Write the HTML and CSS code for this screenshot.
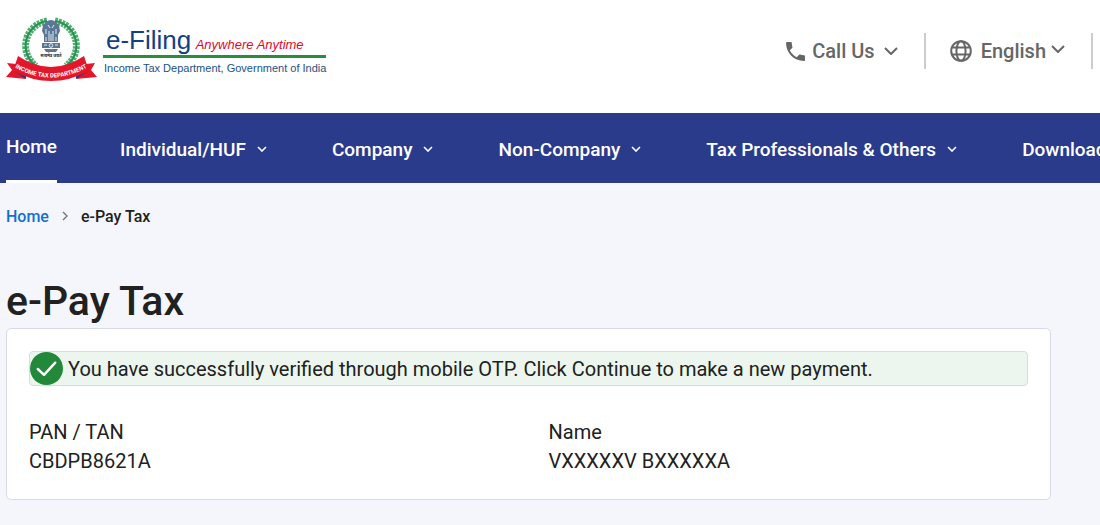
FILE: index.html
```
<!DOCTYPE html>
<html lang="en">
<head>
  <meta charset="UTF-8" />
  <meta name="viewport" content="width=device-width, initial-scale=1.0"/>
  <title>e-Pay Tax</title>
  <link rel="stylesheet" href="styles.css">
</head>
<body>

  <header class="header">
    <a class="logo" href="#">
      <svg class="emblem" viewBox="0 0 92 66" role="img" aria-label="Income Tax Department">
        <!-- wreath -->
        <g fill="none" stroke="#4fae72">
          <path d="M41 4 A25 25 0 0 0 30 49" stroke-width="7" stroke-dasharray="2.600 1"/>
          <path d="M49 4 A25 25 0 0 1 60 49" stroke-width="7" stroke-dasharray="2.600 1"/>
          <path d="M41 4 A25 25 0 0 0 30 49 M49 4 A25 25 0 0 1 60 49" stroke="#2a9150" stroke-width="2"/>
        </g>
        <!-- lion capital -->
        <g fill="#5b7796">
          <path d="M40 5 Q45 1 50 5 L53 8 L54 14 L52 18 L52 25 L38 25 L38 18 L36 14 L37 8 Z"/>
          <path d="M36 26 H54 V31 H36 Z"/>
          <path d="M38 32 H52 L50 35 H40 Z"/>
        </g>
        <g fill="none" stroke="#e3eaf1" stroke-width="1">
          <path d="M42 8 L44 11 M48 8 L46 11 M40 12 V17 M50 12 V17 M43 14 V24 M47 14 V24 M45 17 V24 M40 20 V24 M50 20 V24"/>
          <circle cx="45" cy="28.500" r="1.800"/>
          <path d="M38 28 H41 M49 28 H52"/>
        </g>
        <text class="motto" x="45" y="40" text-anchor="middle">सत्यमेव जयते</text>
        <!-- ribbon -->
        <path d="M10 47 L1 46 L6 53 L0 60 L20 62 Z M80 47 L89 46 L85 53 L91 60 L70 62 Z" fill="#e3162b"/>
        <path d="M8 54 L20 62 L20 57 Z M82 54 L70 62 L70 57 Z" fill="#1c3f7c"/>
        <path d="M12 39 Q45 61 78 39 L83 54 Q45 74 7 54 Z" fill="#e3162b"/>
        <path id="ribbon" d="M8 50 Q45 71 82 50" fill="none"/>
        <text class="ribbon-text"><textPath href="#ribbon" startOffset="50%" text-anchor="middle">INCOME TAX DEPARTMENT</textPath></text>
      </svg>
      <span class="logo-text">
        <span class="logo-top"><span class="brand">e-Filing</span> <em class="tagline">Anywhere Anytime</em></span>
        <span class="department">Income Tax Department, Government of India</span>
      </span>
    </a>

    <div class="tools">
      <button class="tool call" type="button">
        <svg class="icon" viewBox="0 0 18 18" fill="currentColor">
          <path d="M3.620 7.790c1.440 2.830 3.760 5.140 6.590 6.590l2.200-2.200c.27-.27.670-.36 1.020-.24 1.120.37 2.330.57 3.570.57.550 0 1 .45 1 1V17c0 .55-.45 1-1 1C7.610 18 0 10.390 0 1c0-.55.45-1 1-1h3.500c.55 0 1 .45 1 1 0 1.250.2 2.450.57 3.570.11.35.03.74-.25 1.020z"/>
        </svg>
        <span>Call Us</span>
        <svg class="chevron" viewBox="0 0 14 8"><path d="M1 1 L7 7 L13 1"/></svg>
      </button>
      <button class="tool language" type="button">
        <svg class="icon globe" viewBox="0 0 22 22">
          <circle cx="11" cy="11" r="9.800"/>
          <ellipse cx="11" cy="11" rx="4.600" ry="9.800"/>
          <path d="M2 7.500 H20 M2 14.500 H20"/>
        </svg>
        <span>English</span>
        <svg class="chevron" viewBox="0 0 14 8"><path d="M1 1 L7 7 L13 1"/></svg>
      </button>
    </div>
  </header>

  <nav class="nav">
    <a class="nav-link active" href="#">Home</a>
    <a class="nav-link" href="#">Individual/HUF <svg class="caret" viewBox="0 0 10 6"><path d="M1 1 L5 5 L9 1" stroke-width="1.600"/></svg></a>
    <a class="nav-link" href="#">Company <svg class="caret" viewBox="0 0 10 6"><path d="M1 1 L5 5 L9 1" stroke-width="1.600"/></svg></a>
    <a class="nav-link" href="#">Non-Company <svg class="caret" viewBox="0 0 10 6"><path d="M1 1 L5 5 L9 1" stroke-width="1.600"/></svg></a>
    <a class="nav-link" href="#">Tax Professionals &amp; Others <svg class="caret" viewBox="0 0 10 6"><path d="M1 1 L5 5 L9 1" stroke-width="1.600"/></svg></a>
    <a class="nav-link" href="#">Downloads</a>
  </nav>

  <main class="main">
    <div class="breadcrumb">
      <a href="#">Home</a>
      <svg class="separator" viewBox="0 0 6 10"><path d="M1 1 L5 5 L1 9" stroke-width="1.400"/></svg>
      <span>e-Pay Tax</span>
    </div>

    <h1>e-Pay Tax</h1>

    <section class="card">
      <div class="success" role="status">
        <svg class="check" viewBox="0 0 34 34">
          <circle cx="17" cy="17" r="17" fill="#22883a"/>
          <path d="M8 17.500 L14.500 23.500 L26 11" fill="none" stroke="#fff" stroke-width="2.500" stroke-linecap="round" stroke-linejoin="round"/>
        </svg>
        <span>You have successfully verified through mobile OTP. Click Continue to make a new payment.</span>
      </div>
      <dl class="details">
        <div>
          <dt>PAN / TAN</dt>
          <dd>CBDPB8621A</dd>
        </div>
        <div>
          <dt>Name</dt>
          <dd>VXXXXXV BXXXXXA</dd>
        </div>
      </dl>
    </section>
  </main>

</body>
</html>
```
FILE: styles.css
```
* {
  box-sizing: border-box;
}

body {
  margin: 0;
  font-family: Roboto, sans-serif;
  background: #f5f6fb;
  color: #212121;
  overflow-x: hidden;
}

a {
  text-decoration: none;
}

.header {
  display: flex;
  justify-content: space-between;
  align-items: flex-start;
  padding: 17px 7px 30px 6px;
  background: #fff;
}

.logo {
  display: flex;
  gap: 5px;
}

.emblem {
  width: 92px;
  height: 66px;
}

.motto {
  font: bold 4px "Noto Sans", sans-serif;
  fill: #222;
}

.ribbon-text {
  font: bold 6px Roboto, sans-serif;
  fill: #fff;
}

.logo-text {
  display: flex;
  flex-direction: column;
  padding-top: 8px;
  font-family: "Liberation Sans", sans-serif;
  white-space: nowrap;
}

.logo-top {
  height: 33px;
  padding-left: 3px;
  border-bottom: 3px solid #2a8c3c;
  line-height: 30px;
}

.brand {
  font-size: 26px;
  color: #123f86;
}

.tagline {
  font-size: 13px;
  color: #e2062c;
}

.department {
  padding-left: 1px;
  font-size: 11px;
  line-height: 20px;
  color: #1d5183;
}

.tools {
  display: flex;
  padding-top: 16px;
}

.tool {
  display: flex;
  align-items: center;
  height: 36px;
  padding: 0;
  border: 0;
  border-right: 2px solid #ccc;
  background: none;
  font: 500 20px Roboto, sans-serif;
  color: #666;
  cursor: pointer;
}

.call {
  gap: 7px;
  padding-right: 26px;
}

.language {
  gap: 9px;
  padding-left: 24px;
  padding-right: 26px;
}

.icon {
  width: 19px;
  height: 19px;
}

.globe {
  width: 22px;
  height: 22px;
  fill: none;
  stroke: currentColor;
  stroke-width: 2;
}

.chevron {
  width: 14px;
  height: 8px;
  fill: none;
  stroke: currentColor;
  stroke-width: 2;
}

.call .chevron {
  margin-left: 2px;
}

.language .chevron {
  margin: 0 0 5px -4px;
}

.nav {
  display: flex;
  gap: 65px;
  height: 70px;
  padding-left: 6px;
  background: #2a3b8c;
  overflow: hidden;
}

.nav-link {
  flex: none;
  display: flex;
  align-items: center;
  gap: 11px;
  padding-top: 2px;
  font-size: 19px;
  font-weight: 500;
  color: #fff;
  white-space: nowrap;
}

.nav-link.active {
  margin-right: -2px;
  padding-top: 0;
  border-bottom: 3px solid #fff;
}

.caret {
  width: 10px;
  height: 6px;
  fill: none;
  stroke: currentColor;
}

.main {
  padding: 24px 49px 24px 6px;
}

.breadcrumb {
  display: flex;
  align-items: center;
  gap: 13px;
  font-size: 16px;
  font-weight: 500;
  line-height: 20px;
}

.breadcrumb a {
  color: #1170cf;
}

.separator {
  width: 6px;
  height: 10px;
  margin-bottom: 3px;
  fill: none;
  stroke: #777;
}

h1 {
  margin: 50px 0 3px;
  font-size: 41px;
  font-weight: 500;
  line-height: 48px;
}

.card {
  padding: 22px;
  border: 1px solid #d9d9e8;
  border-radius: 5px;
  background: #fff;
  font-size: 20px;
}

.success {
  display: flex;
  align-items: center;
  gap: 5px;
  border: 1px solid #d9d9e8;
  border-radius: 4px;
  background: #ecf6ee;
}

.check {
  flex: none;
  width: 33px;
  height: 33px;
}

.details {
  display: grid;
  grid-template-columns: 1fr 1fr;
  gap: 40px;
  margin: 32px 0 1px;
  line-height: 29px;
}

.details dd {
  margin: 0;
}
```
